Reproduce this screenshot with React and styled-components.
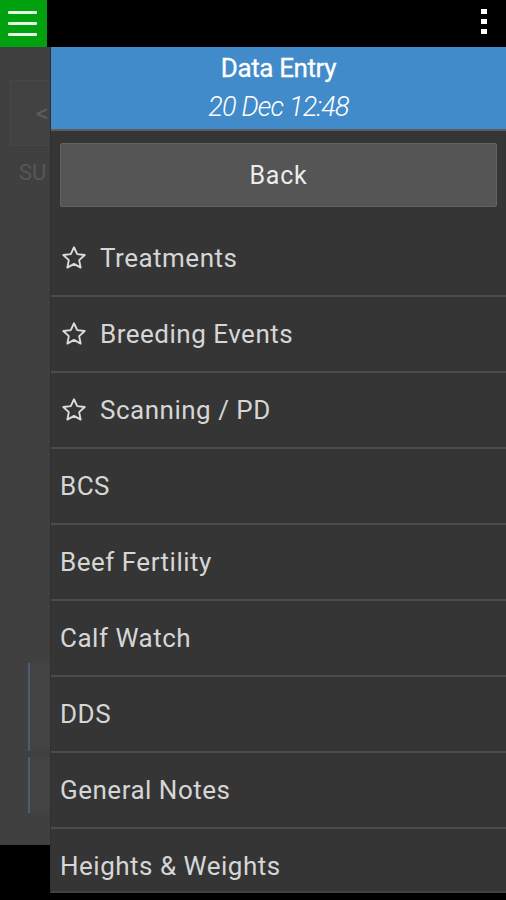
import React from "react";
import styled, { createGlobalStyle } from "styled-components";

const Global = createGlobalStyle`
  html, body { margin: 0; padding: 0; background: #000; }
  body { font-family: Roboto, "Noto Sans", "Liberation Sans", sans-serif; }
  * { box-sizing: border-box; }
`;

const Screen = styled.div`
  width: 506px;
  height: 900px;
  position: relative;
  overflow: hidden;
  background: #000;
  display: flex;
  flex-direction: column;
`;

const TopBar = styled.div`
  height: 47px;
  flex-shrink: 0;
  background: #000;
  display: flex;
  align-items: stretch;
  justify-content: space-between;
`;

const MenuButton = styled.div`
  width: 47px;
  background: #00a00e;
  display: flex;
  flex-direction: column;
  justify-content: center;
  align-items: flex-start;
  gap: 8px;
  padding-left: 8px;
`;

const MenuLine = styled.span`
  display: block;
  width: 29px;
  height: 3px;
  background: #e6f5e6;
  border-radius: 1px;
`;

const Overflow = styled.div`
  width: 20px;
  margin-right: 12px;
  display: flex;
  flex-direction: column;
  align-items: center;
  justify-content: center;
  gap: 5px;
  padding-bottom: 5px;
`;

const Dot = styled.span`
  width: 6px;
  height: 5px;
  background: #fff;
`;

const Underlay = styled.div`
  height: 798px;
  flex-shrink: 0;
  background: #404040;
  position: relative;
  padding: 33px 0 0 10px;
  display: flex;
  flex-direction: column;
  align-items: flex-start;
`;

const NavBox = styled.div`
  width: 42px;
  height: 66px;
  border: 1px solid #474747;
  background: #424242;
  display: flex;
  align-items: center;
  justify-content: flex-end;
  padding-right: 2px;
  color: #5c5c5c;
  font-size: 26px;
`;

const FaintText = styled.div`
  margin: ${(p) => p.$m || "0"};
  color: #565656;
  font-size: ${(p) => p.$size || 22}px;
`;

const FaintCard = styled.div`
  width: 24px;
  height: ${(p) => p.$h}px;
  margin: ${(p) => p.$m};
  border-left: 2px solid #4c5d73;
  background: #434343;
`;

const Drawer = styled.div`
  position: absolute;
  top: 47px;
  left: 51px;
  right: 0;
  height: 846px;
  background: #353535;
  display: flex;
  flex-direction: column;
  overflow: hidden;
  border-bottom: 2px solid #424242;
  box-shadow: -1px 0 0 #303030;
`;

const Header = styled.div`
  height: 84px;
  flex-shrink: 0;
  background: #428bca;
  border-bottom: 2px solid #5d5d5d;
  display: flex;
  flex-direction: column;
  align-items: center;
  justify-content: center;
  gap: 9px;
  color: #fff;
  padding: 0 0 1px;
`;

const Title = styled.div`
  font-size: 26px;
  font-weight: 400;
  line-height: 30px;
  letter-spacing: -0.4px;
  -webkit-text-stroke: 0.3px #fff;
`;

const Stamp = styled.div`
  font-size: 27px;
  font-style: italic;
  font-weight: 300;
  line-height: 30px;
  letter-spacing: -0.8px;
`;

const BackButton = styled.div`
  margin: 12px 9px 0 9px;
  height: 64px;
  flex-shrink: 0;
  background: #555555;
  border: 1px solid #626262;
  border-radius: 2px;
  display: flex;
  align-items: center;
  justify-content: center;
  color: #ececec;
  font-size: 25px;
  letter-spacing: 0.8px;
`;

const List = styled.div`
  margin-top: 14px;
  flex-shrink: 0;
  display: flex;
  flex-direction: column;
`;

const Row = styled.div`
  height: 76px;
  flex-shrink: 0;
  display: flex;
  align-items: center;
  gap: 12px;
  padding-left: 9px;
  border-bottom: 2px solid #4b4b4b;
  color: #d6d6d6;
  font-size: 26px;
  letter-spacing: 0.5px;
`;

const StarIcon = () => (
  <svg width="28" height="28" viewBox="0 0 24 24" fill="none" stroke="#dcdcdc" strokeWidth="1.6" strokeLinejoin="round">
    <path d="M12 2.8l2.75 5.9 6.45.75-4.78 4.4 1.28 6.37L12 17.05 6.3 20.22l1.28-6.37-4.78-4.4 6.45-.75z" />
  </svg>
);

const items = [
  { label: "Treatments", star: true },
  { label: "Breeding Events", star: true },
  { label: "Scanning / PD", star: true },
  { label: "BCS" },
  { label: "Beef Fertility" },
  { label: "Calf Watch" },
  { label: "DDS" },
  { label: "General Notes" },
  { label: "Heights & Weights" },
];

export default function App() {
  return (
    <>
      <Global />
      <Screen>
        <TopBar>
          <MenuButton>
            <MenuLine />
            <MenuLine />
            <MenuLine />
          </MenuButton>
          <Overflow>
            <Dot />
            <Dot />
            <Dot />
          </Overflow>
        </TopBar>
        <Underlay>
          <NavBox>&lt;</NavBox>
          <FaintText $m="14px 0 0 9px">SU</FaintText>
          <FaintCard $h={88} $m="478px 0 0 18px" />
          <FaintCard $h={56} $m="6px 0 0 18px" />
        </Underlay>
        <Drawer>
          <Header>
            <Title>Data Entry</Title>
            <Stamp>20 Dec 12:48</Stamp>
          </Header>
          <BackButton>Back</BackButton>
          <List>
            {items.map((it) => (
              <Row key={it.label}>
                {it.star && <StarIcon />}
                <span>{it.label}</span>
              </Row>
            ))}
          </List>
        </Drawer>
      </Screen>
    </>
  );
}
